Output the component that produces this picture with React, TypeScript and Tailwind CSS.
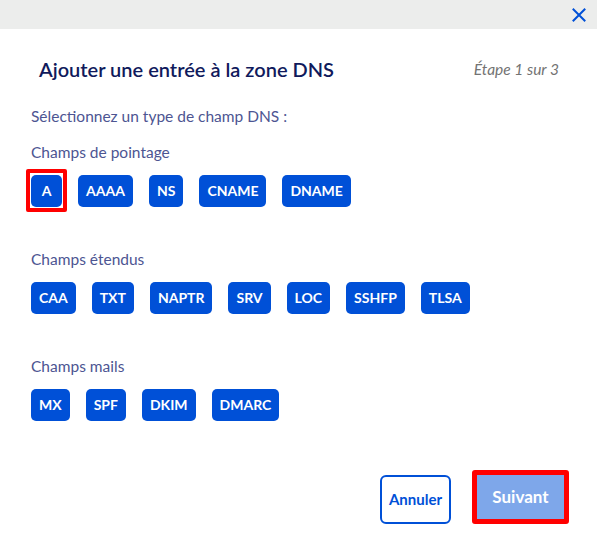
import React from "react";

const groups: { label: string; items: string[] }[] = [
  { label: "Champs de pointage", items: ["A", "AAAA", "NS", "CNAME", "DNAME"] },
  { label: "Champs étendus", items: ["CAA", "TXT", "NAPTR", "SRV", "LOC", "SSHFP", "TLSA"] },
  { label: "Champs mails", items: ["MX", "SPF", "DKIM", "DMARC"] },
];

function TypeButton({ label, marked }: { label: string; marked?: boolean }) {
  return (
    <div className="relative">
      <button className="h-[32px] min-w-[31px] px-[8px] rounded-[5px] bg-[#0050d7] text-white font-bold text-[14px] leading-none flex items-center justify-center">
        {label}
      </button>
      {marked && (
        <span className="absolute -left-[5px] -right-[5px] -top-[6px] -bottom-[5px] border-4 border-[#ff0000] rounded-[2px] pointer-events-none" />
      )}
    </div>
  );
}

export default function App() {
  return (
    <div className="w-[597px] h-[546px] bg-white flex flex-col font-['Lato','Liberation_Sans',sans-serif]">
      <div className="h-[29px] bg-[#ecedec] flex items-center justify-end pr-[11px] shrink-0">
        <svg width="14" height="14" viewBox="0 0 14 14" fill="none" stroke="#0050d7" strokeWidth="2" strokeLinecap="square">
          <path d="M1.5 1.5L12.5 12.5M12.5 1.5L1.5 12.5" />
        </svg>
      </div>

      <div className="mt-[26px] flex items-center justify-between pl-[39px] pr-[38px]">
        <h2 className="text-[20px] leading-[28px] font-semibold text-[#101a5c]">
          Ajouter une entrée à la zone DNS
        </h2>
        <span className="italic text-[15.5px] leading-[20px] text-[#737373]">Étape 1 sur 3</span>
      </div>

      <div className="px-[31px] flex flex-col">
        <p className="mt-[23px] text-[15.5px] leading-[20px] text-[#4d5592]">
          Sélectionnez un type de champ DNS :
        </p>
        <div className="mt-[16px] flex flex-col gap-[42px]">
          {groups.map((g) => (
            <div key={g.label} className="flex flex-col">
              <p className="text-[15.5px] leading-[20px] text-[#4d5592]">{g.label}</p>
              <div className="mt-[13px] flex gap-4">
                {g.items.map((it) => (
                  <TypeButton key={it} label={it} marked={it === "A"} />
                ))}
              </div>
            </div>
          ))}
        </div>
      </div>

      <div className="mt-auto flex items-end justify-end gap-[21px] pr-[28px] pb-[22px]">
        <button className="w-[71px] h-[49px] border-2 border-[#0050d7] rounded-[6px] text-[#0050d7] font-bold text-[15px] flex items-center justify-center">
          Annuler
        </button>
        <div className="w-[97px] h-[54px] border-[5px] border-[#ff0000] rounded-[3px] flex">
          <button className="flex-1 bg-[#7ea7ea] text-white font-bold text-[17px] flex items-center justify-center">
            Suivant
          </button>
        </div>
      </div>
    </div>
  );
}
